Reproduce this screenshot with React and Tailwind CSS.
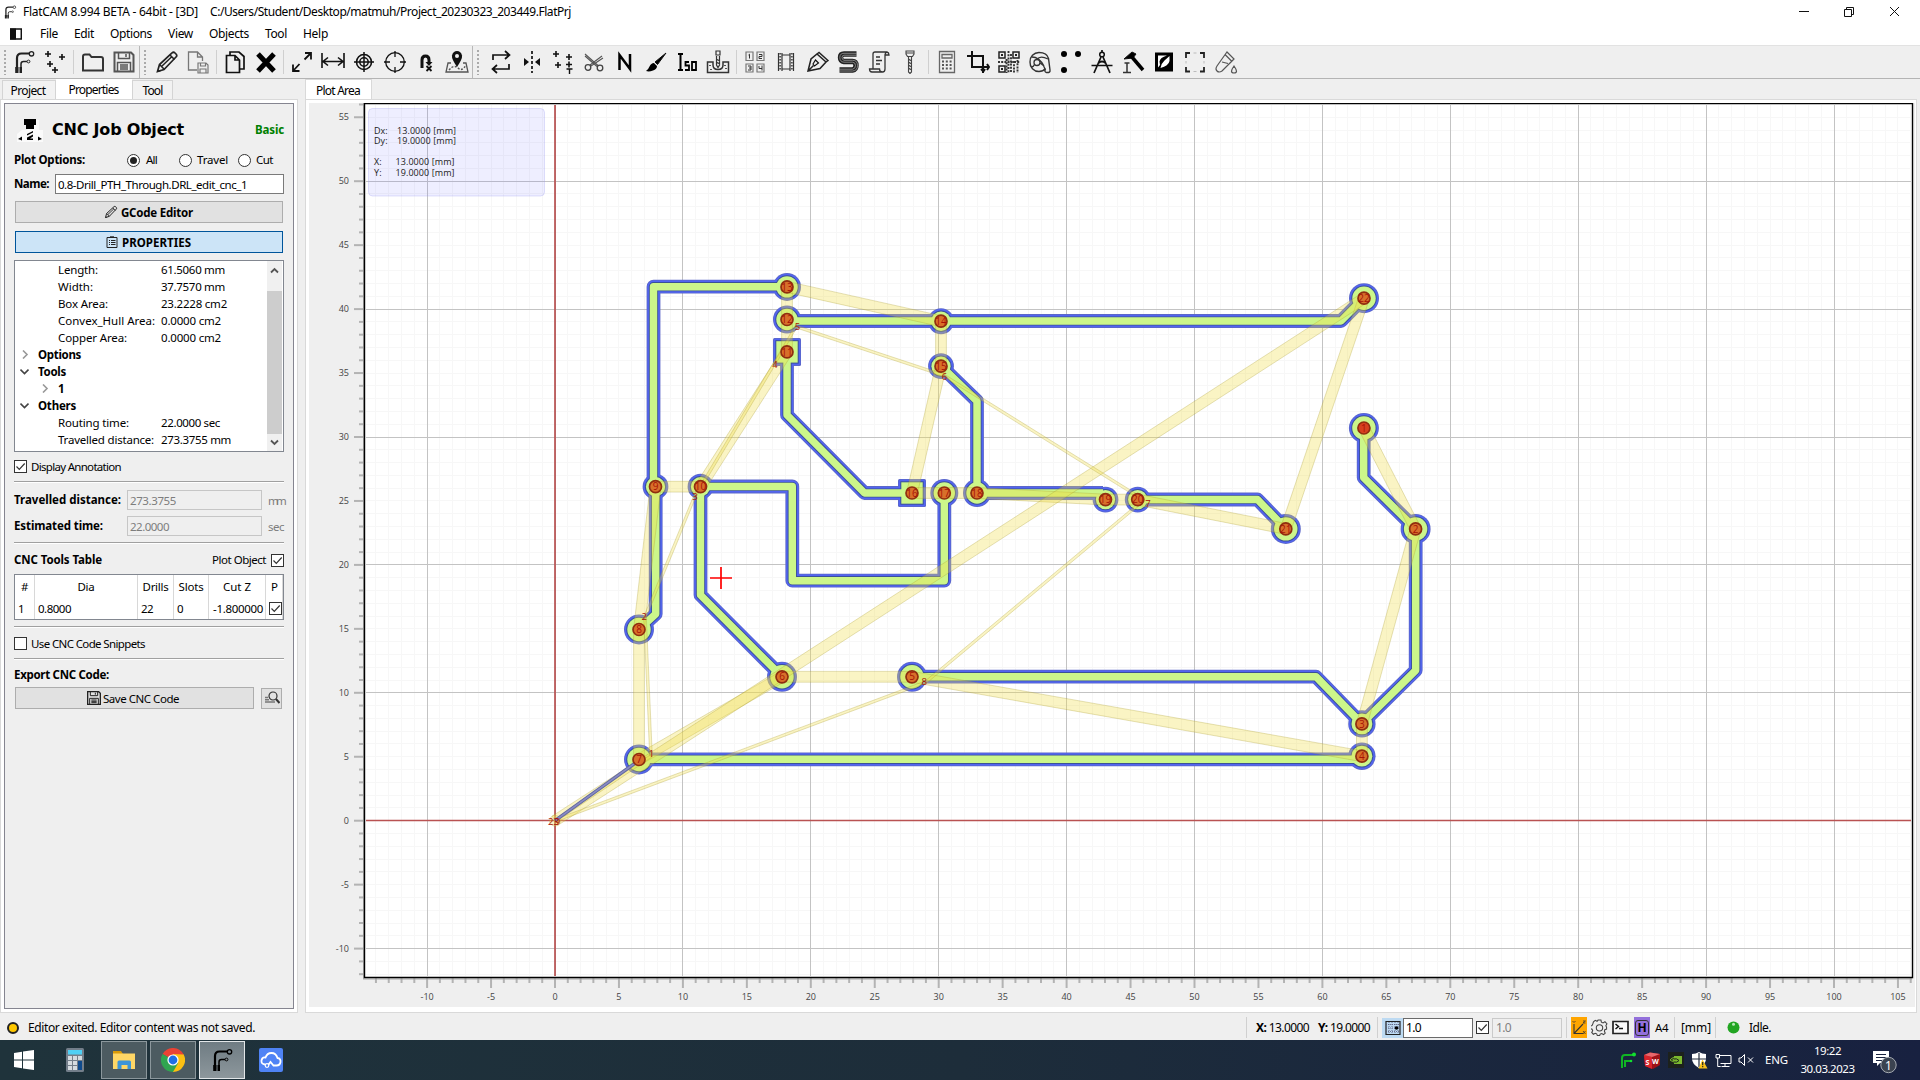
import React, { useLayoutEffect, useRef, useState } from "react";

/* Text run whose tracking is adjusted so that it fills a given width. */
function T({ w, className = "", children }) {
  const ref = useRef(null);
  const [ls, setLs] = useState(null);
  useLayoutEffect(() => {
    const n = ref.current.textContent.length;
    const natural = ref.current.getBoundingClientRect().width;
    if (w && n) setLs((w - natural) / n);
  }, [w]);
  return (
    <span ref={ref} className={`inline-block shrink-0 whitespace-pre ${className}`} style={ls === null ? undefined : { letterSpacing: `${ls}px` }}>
      {children}
    </span>
  );
}

function Svg({ s = 24, children, className = "", vb = "0 0 24 24" }) {
  return (
    <svg width={s} height={s} viewBox={vb} fill="none" stroke="#111" strokeWidth="1.5" className={`block shrink-0 ${className}`}>
      {children}
    </svg>
  );
}

/* ---------- toolbar icons ---------- */
const plusMark = (x, y, k) => <path key={k} d={`M${x - 3} ${y}h6M${x} ${y - 3}v6`} strokeWidth="1.6" />;

const FlatLogo = ({ s = 24, c = "#222" }) => (
  <Svg s={s}>
    <path d="M5 21V8Q5 3.500 9.500 3.500H17" stroke={c} strokeWidth="2.200" />
    <path d="M9 21v-7q0-2.500 2.500-2.500H15" stroke={c} strokeWidth="1.500" />
    <circle cx="19.500" cy="3.800" r="2.200" stroke={c} strokeWidth="1.300" />
    <circle cx="16.500" cy="11.500" r="1.400" stroke={c} strokeWidth="1" />
    <path d="M3.200 17h3.300v6H3.200zM7.500 17H10v6H7.500z" fill={c} stroke="none" />
  </Svg>
);
const NewGeo = () => <Svg>{plusMark(5, 4, 1)}{plusMark(19, 7, 2)}{plusMark(7, 14, 3)}{plusMark(12, 20, 4)}</Svg>;
const FolderI = () => <Svg><path d="M2 20.500V6.500Q2 4.500 4 4.500h4.500l2 2.500H20q2 0 2 2v11.500z" stroke="#333" strokeWidth="2" /></Svg>;
const SaveI = ({ s = 24, c = "#555" }) => (
  <Svg s={s}>
    <path d="M2.500 2.500h16.500l2.500 2.500v16.500h-19z" stroke={c} strokeWidth="2" />
    <path d="M6.500 2.500v6h11v-6M14 4v3M5.500 21v-8.500h13V21M8 15h8M8 17h8M8 19h8" stroke={c} />
  </Svg>
);
const PencilI = ({ s = 24 }) => (
  <Svg s={s}>
    <path d="M2.500 21.500l2-7L17 3q1.500-1.500 3 0l1 1q1.500 1.500 0 3L9 19.500z" stroke="#222" strokeWidth="1.700" />
    <path d="M4.500 14.500l5 5M15 5l4.500 4.500M6.500 16.500L17 6.500M2.500 21.500l3-1" stroke="#222" />
  </Svg>
);
const FileSaveI = () => (
  <Svg>
    <path d="M11 20H2.500V2h9l5 5v4M11.500 2v5h5" stroke="#777" strokeWidth="1.300" />
    <path d="M12 13h8l2 2v8H12zM14.500 13v3h5v-3M14 23v-4h6v4" stroke="#777" strokeWidth="1.200" />
  </Svg>
);
const CopyI = () => <Svg><path d="M3.500 22.500V5.500h8.500l4.500 4.500v12.500zM7 5V2h9l5 4.500V19h-4M12 5.500V10h4.500" strokeWidth="1.700" /></Svg>;
const XI = () => <Svg><path d="M4 4l16 17M20 4L4 21" stroke="#000" strokeWidth="5" /></Svg>;
const ExpandI = () => <Svg><path d="M3 21l6.500-7M14.500 9.500L21 3M15 3h6v6.500M3 14.500V21h6.500" strokeWidth="1.800" /></Svg>;
const DistI = () => <Svg><path d="M1 3v15M23 3v15M2 11.500h20M7 7.500l-5 4 5 4M17 7.500l5 4-5 4" strokeWidth="1.600" /></Svg>;
const TargetI = () => <Svg><circle cx="12" cy="12" r="7.500" strokeWidth="1.600" /><circle cx="12" cy="12" r="4.200" strokeWidth="1.500" /><path d="M12 2v20M2 12h20" strokeWidth="1.500" /></Svg>;
const CrossI = () => <Svg><circle cx="12" cy="12" r="9.300" strokeWidth="1.300" /><path d="M12 1v6M12 17v6M1 12h6M17 12h6" strokeWidth="1.300" /></Svg>;
const JumpI = () => <Svg><path d="M8 18V10q0-4 3.500-4T15 10v3" strokeWidth="3" /><path d="M11.500 12h7L15 16z" fill="#111" stroke="none" /><path d="M12.500 16l5 5M17.500 16l-5 5" strokeWidth="1.800" /></Svg>;
const MapI = () => (
  <Svg>
    <path d="M6 13H3L1 22h22l-2-9h-3" stroke="#555" strokeWidth="1.300" /><path d="M4 20q5-6 9-2t8-3" stroke="#555" strokeDasharray="2 1.500" />
    <path d="M12 17Q6.500 9 7 5.500Q8 1 12 1t5 4.500Q17.500 9 12 17z" fill="#111" stroke="none" /><circle cx="12" cy="6" r="2" fill="#efefef" stroke="none" />
  </Svg>
);
const SwapI = () => <Svg><path d="M4 10V5h16M16 1l4.500 4L16 9M20 14v5H4M8 15l-4.500 4L8 23" strokeWidth="1.700" /></Svg>;
const MirrorI = () => <Svg><path d="M12 1v22" strokeDasharray="3 2" strokeWidth="1.700" /><path d="M4 8l5 4-5 4zM20 8l-5 4 5 4z" fill="#111" stroke="none" /></Svg>;
const DotsTI = () => <Svg>{plusMark(5, 4, 1)}{plusMark(18, 7, 2)}{plusMark(7, 15, 3)}{plusMark(18, 14.5, 4)}<path d="M15.500 19h6M18.500 19v5" strokeWidth="1.400" /></Svg>;
const ScissI = () => (
  <Svg><path d="M3 4l13 11.500M20 6L8 15M3 6l12 10.500M21 8l-12 8" stroke="#555" strokeWidth="1.100" /><circle cx="6" cy="17.500" r="2.800" stroke="#444" strokeWidth="1.300" /><circle cx="18" cy="18" r="2.800" stroke="#444" strokeWidth="1.300" /></Svg>
);
const NI = () => <Svg><path d="M6.500 20V5l10.500 14V4" stroke="#000" strokeWidth="2.500" /></Svg>;
const BrushI = () => <Svg><path d="M22 3L11 12l2.500 2.500z" fill="#000" strokeWidth="1" /><path d="M2 21q2-1 3.500-4.500T10 13l3 3q0 3-4 4.500T2 21z" fill="#000" stroke="none" /></Svg>;
const IsoI = () => <Svg><path d="M3 4h5M5.500 4v16M3 20h5" strokeWidth="2" stroke="#000" /><path d="M14 12h-3.500v3.500H14V20h-4M17 12h4v8h-4z" strokeWidth="1.800" stroke="#000" /></Svg>;
const MillI = () => (
  <Svg>
    <path d="M1.500 12H7v3q0 4.500 5 4.500t5-4.500v-3h5.500v10.500h-21z" stroke="#333" strokeWidth="1.500" />
    <path d="M10 1h4v4h-4zM10.500 6v9l1.500 2.500 1.500-2.500V6M10 9l4 2M10 12l4 2" stroke="#333" strokeWidth="1.200" /><path d="M4 15v1M5 19v1M19 15v1M20 18v1" stroke="#222" />
  </Svg>
);
const PanelI = () => (
  <Svg>
    <path d="M3 2h7v8.500H3zM14 2h7v8.500h-7zM3 14h7v8H3zM14 14h7v8h-7z" stroke="#777" strokeWidth="1.200" />
    <path d="M5.500 5l1-.8V8.500M16 4.500h3v2h-3v2h3M5 16h3v4H5M6 18h2M16 16v2.500h3M19 15.500v5" stroke="#333" strokeWidth="1" />
  </Svg>
);
const FilmI = () => <Svg><path d="M4.500 3v18M19.500 3v18M8 3v18M16 3v18M8 5h8M8 19h8" stroke="#333" strokeWidth="1.200" /><path d="M6.200 3v18M17.800 3v18" stroke="#555" strokeWidth="2" strokeDasharray="1.500 1.500" /></Svg>;
const PenI = () => <Svg><path d="M3 21l3-12 6-5 9 8-6 6.500zM12 4l2-1.500 9 8-2 1.500M3 21l5.500-5.500" strokeWidth="1.500" stroke="#222" /><path d="M8 14l2.500-4 3 3-4 3z" strokeWidth="1.200" /></Svg>;
const SolderI = () => (
  <Svg>
    <path d="M20.500 4H8Q4.500 4 4.500 7.500T8 11.500h8.500q3.500 0 3.500 4T16.500 20H3.500" stroke="#222" strokeWidth="5.400" />
    <path d="M21 3.300H8Q3.800 3.300 3.800 7.500T8 12.200h8.500q3 0 3 3.300t-3 3.700H3M21 5.200H8Q6 5.200 6 7.500T8 10.300h8.500q5 0 5 5.200T16.500 21H3" stroke="#aaa" strokeWidth=".7" />
  </Svg>
);
const ScriptI = () => <Svg><path d="M6 19V4q0-2 2-2h12q2 .5 2 3h-4v14q0 3-2.500 3H5q-2.500 0-2.500-3h10q0 3 3 3M18 5q0-2.500 2-3M9 7h4M9 10.500h6M9 14h4" stroke="#333" strokeWidth="1.300" /></Svg>;
const BitI = () => <Svg><path d="M8 1h8v3l-1.500 2.500h-5L8 4zM8 3h8M10.500 7v15l1.500 1.500 1.500-1.500V7M10.500 9l3 2M10.500 12l3 2M10.500 15l3 2M10.500 18l3 2" stroke="#444" strokeWidth="1.100" /></Svg>;
const CalcI = () => (
  <Svg><path d="M4.500 1.500h15v21h-15zM7 4.500h10v3.500H7z" stroke="#666" strokeWidth="1.300" /><path d="M7 11.500h11M7 15h11M7 18.500h11" stroke="#555" strokeWidth="2" strokeDasharray="2 1.800" /></Svg>
);
const CropI = () => <Svg><path d="M6 1v16h17M1 6h16v17M17 21l-2-2M19 19l-2 3M21 14l2 3-2 3" strokeWidth="2" /></Svg>;
const QrI = () => (
  <Svg>
    <path d="M2 2h6v6H2zM16 2h6v6h-6zM2 16h6v6H2z" stroke="#222" strokeWidth="1.500" /><path d="M4 4h2v2H4zM18 4h2v2h-2zM4 18h2v2H4z" fill="#222" stroke="none" />
    <path d="M11.500 1v22M14 4v19M17 11v12M20.500 10v13M1 12h22M9.500 9v14" stroke="#333" strokeWidth="1.900" strokeDasharray="2 1.200" />
  </Svg>
);
const RollI = () => <Svg><path d="M2 12a9 9 0 0 1 9-9.500q8 0 9.500 6L22 20q.5 3-3.500 2.500Q16 22 17.500 19M2 12a9 9 0 0 0 9 9.500q4 0 6.500-3" strokeWidth="1.400" stroke="#333" /><circle cx="9" cy="12.500" r="3" stroke="#333" strokeWidth="1.300" /><path d="M4 7q7 0 12 9M3.500 17q2 0 3-2.500M9 9.500Q12 5 20 9M12 13q4 2 5 6" stroke="#333" strokeWidth="1.300" /></Svg>;
const FidI = () => <Svg><g fill="#000" stroke="none"><circle cx="5" cy="4" r="3" /><circle cx="19" cy="4" r="3" /><circle cx="5" cy="20" r="3" /></g></Svg>;
const CompassI = () => <Svg><circle cx="12" cy="4.500" r="2.300" /><path d="M12 0v3M11 7L4 23M13 7l7 16M1.500 15.500h21M8.500 13q3.500-3 7 0" strokeWidth="1.700" /></Svg>;
const HammerI = () => <Svg><path d="M3 9l8-7 4 2-3 4z" fill="#000" strokeWidth="1" /><path d="M10.500 6.500L22 20" stroke="#000" strokeWidth="3.500" /><path d="M6 13v9M2 22.500h8M3.500 13h5" strokeWidth="1.500" stroke="#333" /></Svg>;
const InvertI = () => <Svg><path d="M3 2.500h18v19H3z" fill="#000" stroke="none" /><path d="M6 5.500h9q-7 2-7.500 6L8 15l-2 2.500zM17.500 6v5q-1 5-9 7 1-5 4-7.500z" fill="#fff" stroke="none" /></Svg>;
const CornersI = () => <Svg><path d="M3 8V3h4M17 3h4v5M21 17v4.500h-4M7 21.500H3V17" strokeWidth="1.800" stroke="#222" /><path d="M10.500 3h3M10.500 21.500h3M3 11v2.500M21 11v2.500" stroke="#bbb" strokeWidth="1" /></Svg>;
const TubeI = () => <Svg><path d="M13 2l7 7-1.500 1.500L8 21q-3 2-5 0t0-5L11.500 4zM11 4.500l6.500 6.500M8 12l6 1.500" stroke="#555" strokeWidth="1.200" /><path d="M20 16q5 7 0 7t0-7z" stroke="#555" strokeWidth="1.200" /></Svg>;

const toolGroups = [
  [FlatLogo, NewGeo], [FolderI, SaveI], [PencilI, FileSaveI], [CopyI, XI],
  [ExpandI, DistI, TargetI, CrossI, JumpI, MapI],
  [SwapI, MirrorI, DotsTI, ScissI, NI, BrushI, IsoI, MillI],
  [PanelI, FilmI, PenI, SolderI, ScriptI, BitI],
  [CalcI, CropI, QrI, RollI, FidI, CompassI, HammerI, InvertI, CornersI, TubeI],
];
const Sep = ({ cls }) => <div className={`flex h-full justify-center ${cls}`}><div className="my-auto h-[24px] w-px bg-[#cfcfcf]" /></div>;
const Handle = ({ cls }) => (
  <div className={`flex h-full items-center ${cls}`}>
    <div className="w-px self-stretch bg-[#b8b8b8]" />
    <Svg s={26} vb="0 0 26 26" className="-ml-[6px] -mr-[10px]"><path d="M11 1v25" stroke="#aaa" strokeWidth="2" strokeDasharray="2 2" /></Svg>
  </div>
);
const dividers = [
  <Sep key="a" cls="w-[7px]" />, <Handle key="b" cls="w-[12px]" />, <Sep key="c" cls="w-[6px]" />, <Sep key="d" cls="w-[5px]" />,
  <Handle key="e" cls="w-[13px]" />, <Sep key="f" cls="w-[6px]" />, <Sep key="g" cls="w-[6px]" />,
];

function Toolbar() {
  return (
    <div className="flex h-[34px] items-center border-y border-t-[#e2e2e2] border-b-[#b4b4b4] bg-[#efefef]">
      <div className="w-[8px] shrink-0">
        <svg width="8" height="26" className="block"><path d="M5 1v25" stroke="#aaa" strokeWidth="2" strokeDasharray="2 2" /></svg>
      </div>
      {toolGroups.map((g, i) => (
        <React.Fragment key={i}>
          {g.map((I, j) => <div key={j} className="flex w-[31px] shrink-0 justify-center"><I /></div>)}
          {dividers[i]}
        </React.Fragment>
      ))}
    </div>
  );
}

/* ---------- left panel ---------- */
const Check = ({ on, className = "" }) => (
  <div className={`flex size-[13px] shrink-0 items-center justify-center border border-[#333] bg-white ${className}`}>
    {on && <Svg s={11} vb="0 0 11 11"><path d="M1.500 5.500L4.300 8.300 9.700 2.500" stroke="#333" strokeWidth="1.200" /></Svg>}
  </div>
);
const Radio = ({ on }) => (
  <div className="flex size-[13px] shrink-0 items-center justify-center rounded-full border border-[#333] bg-white">
    {on && <div className="size-[7px] rounded-full bg-[#222]" />}
  </div>
);
const Hr = ({ cls }) => <div className={`h-[2px] shrink-0 border-t border-[#a0a0a0] bg-white ${cls}`} />;

const treeRows = [
  ["Length:", 40, "61.5060 mm", 64], ["Width:", 35, "37.7570 mm", 64], ["Box Area:", 50, "23.2228 cm2", 66],
  ["Convex_Hull Area:", 97, "0.0000 cm2", 60], ["Copper Area:", 69, "0.0000 cm2", 60],
];
const TreeRow = ({ r }) => (
  <div className="flex h-[17px] items-center pl-[43px]">
    <div className="w-[103px]"><T w={r[1]}>{r[0]}</T></div><T w={r[3]}>{r[2]}</T>
  </div>
);
const Chev = ({ open }) => (
  <Svg s={9} vb="0 0 9 9"><path d={open ? "M.5 2.500l4 4 4-4" : "M3 .5l4 4-4 4"} stroke={open ? "#444" : "#999"} strokeWidth="1.600" /></Svg>
);
const Branch = ({ open, label, w, cls }) => (
  <div className={`flex h-[17px] items-center ${cls}`}><Chev open={open} /><T w={w} className="ml-[9px] font-bold">{label}</T></div>
);

function LeftPanel() {
  return (
    <div className="flex w-[298px] shrink-0 flex-col">
      <div className="flex h-[20px] items-end pl-[2px]">
        <div className="flex h-[19px] w-[54px] items-center justify-center border border-b-0 border-[#d4d4d4] bg-[#f2f2f2] pr-[2px] pt-[2px]"><T w={35}>Project</T></div>
        <div className="flex h-[20px] w-[76px] items-center justify-center bg-white pr-[1px] pt-[2px]"><T w={50}>Properties</T></div>
        <div className="flex h-[19px] w-[41px] items-center justify-center border border-b-0 border-[#d4d4d4] bg-[#f2f2f2] pt-[2px]"><T w={20}>Tool</T></div>
      </div>
      <div className="flex h-[914px] flex-col border border-[#d9d9d9] bg-white py-[3px] pl-[3px] pr-[3px]">
        <div className="flex grow flex-col border border-[#858590] bg-[#efefef] pl-[9px] pr-[9px] text-[11.500px]">
          <div className="mt-[12px] flex h-[28px] items-center">
            <svg width="28" height="26" viewBox="0 0 28 26" className="ml-[2px] block shrink-0">
              <path d="M1 25V17l5-4h5V3h12v10h4v12z" fill="#fafafa" />
              <path d="M8 2h12v6h-2v4h-8V8H8z" fill="#000" /><path d="M11 17l6-3v1.500l-6 3zM11 20.500l6-3v2l-3 2h3v1.500h-6z" fill="#000" />
              <path d="M2 22l4-2.500v4zM26 22l-4-2.500v4z" fill="#000" />
            </svg>
            <T w={132} className="ml-[8px] font-[DejaVu_Sans] text-[16px] font-bold">CNC Job Object</T>
            <T w={29} className="ml-auto font-bold text-[#008000]">Basic</T>
          </div>
          <div className="mt-[6px] flex h-[20px] items-center">
            <T w={71} className="mr-[42px] font-bold">Plot Options:</T>
            <Radio on /><T w={11} className="ml-[6px] mr-[22px]">All</T>
            <Radio /><T w={31} className="ml-[5px] mr-[10px]">Travel</T>
            <Radio /><T w={17} className="ml-[5px]">Cut</T>
          </div>
          <div className="mt-[4px] flex h-[20px] items-center">
            <T w={35} className="mr-[6px] font-bold">Name:</T>
            <div className="flex h-full grow items-center border border-[#7a7a7a] bg-white pl-[2px] pt-[2px]"><T w={189}>0.8-Drill_PTH_Through.DRL_edit_cnc_1</T></div>
          </div>
          <div className="mx-[1px] mt-[7px] flex h-[22px] items-center border border-[#adadad] bg-[#e1e1e1] pl-[88px] font-bold"><PencilI s={14} /><T w={72} className="ml-[3px] mt-[2px]">GCode Editor</T></div>
          <div className="mx-[1px] mt-[8px] flex h-[22px] items-center border border-[#00559b] bg-[#cce4f7] pl-[90px] font-bold">
            <Svg s={12} vb="0 0 12 12"><path d="M1 1.500h10v10H1zM3 4.500h1M5 4.500h4.500M3 6.500h1M5 6.500h4.500M3 8.500h1M5 8.500h4.500M4 .8h4" stroke="#222" strokeWidth="1" /></Svg>
            <T w={69} className="ml-[4px] mt-[2px]">PROPERTIES</T>
          </div>
          <div className="mt-[7px] flex h-[192px] border border-[#828790] bg-white">
            <div className="grow">
              {treeRows.map((r) => <TreeRow key={r[0]} r={r} />)}
              <Branch label="Options" w={43} cls="pl-[5px]" />
              <Branch open label="Tools" w={28} cls="pl-[5px]" />
              <Branch label="1" w={6} cls="pl-[25px]" />
              <Branch open label="Others" w={38} cls="pl-[5px]" />
              <TreeRow r={["Routing time:", 71, "22.0000 sec", 59]} />
              <TreeRow r={["Travelled distance:", 96, "273.3755 mm", 70]} />
            </div>
            <div className="mr-[1px] flex w-[15px] flex-col items-center bg-[#f0f0f0]">
              <Svg s={9} vb="0 0 9 9" className="mt-[5px]"><path d="M1 6.500L4.500 3 8 6.500" stroke="#555" strokeWidth="1.800" /></Svg>
              <div className="mt-[16px] h-[143px] w-full bg-[#cdcdcd]" />
              <Svg s={9} vb="0 0 9 9" className="mt-[4px]"><path d="M1 2.500L4.500 6 8 2.500" stroke="#555" strokeWidth="1.800" /></Svg>
            </div>
          </div>
          <div className="mt-[6px] flex h-[17px] items-center"><Check on /><T w={90} className="ml-[4px]">Display Annotation</T></div>
          <Hr cls="mt-[6px]" />
          <div className="mt-[7px] flex h-[20px] items-center">
            <div className="w-[113px]"><T w={107} className="font-bold">Travelled distance:</T></div>
            <div className="flex h-full w-[135px] items-center border border-[#c6c6c6] pl-[2px] pt-[2px] text-[#7d7d7d]"><T w={46}>273.3755</T></div>
            <T w={16} className="ml-auto mt-[2px] text-[#7d7d7d]">mm</T>
          </div>
          <div className="mt-[6px] flex h-[20px] items-center">
            <div className="w-[113px]"><T w={89} className="font-bold">Estimated time:</T></div>
            <div className="flex h-full w-[135px] items-center border border-[#c6c6c6] pl-[2px] pt-[2px] text-[#7d7d7d]"><T w={39}>22.0000</T></div>
            <T w={16} className="ml-auto mt-[2px] text-[#7d7d7d]">sec</T>
          </div>
          <Hr cls="mt-[6px]" />
          <div className="mt-[7px] flex h-[18px] items-center">
            <T w={88} className="mr-auto font-bold">CNC Tools Table</T><T w={54} className="mr-[5px]">Plot Object</T><Check on />
          </div>
          <div className="mt-[5px] grid h-[46px] grid-cols-[20px_103px_36px_35px_57px_1fr] grid-rows-[23px_21px] border border-[#828790] bg-white [&>*]:flex [&>*]:items-center [&>*]:border-r [&>*]:border-[#d8d8d8]">
            {[["#", 7], ["Dia", 17], ["Drills", 26], ["Slots", 25], ["Cut Z", 28], ["P", 6]].map((c) => <div key={c[0]} className="justify-center"><T w={c[1]}>{c[0]}</T></div>)}
            <div className="pl-[3px]"><T w={6}>1</T></div>
            <div className="pl-[3px]"><T w={33}>0.8000</T></div>
            <div className="pl-[3px]"><T w={12}>22</T></div>
            <div className="pl-[3px]"><T w={6}>0</T></div>
            <div className="pl-[4px]"><T w={50}>-1.800000</T></div>
            <div className="justify-end"><Check on /></div>
          </div>
          <Hr cls="mt-[6px]" />
          <div className="mt-[7px] flex h-[17px] items-center"><Check /><T w={114} className="ml-[4px]">Use CNC Code Snippets</T></div>
          <Hr cls="mt-[6px]" />
          <div className="mt-[6px] flex h-[18px] items-center"><T w={95} className="font-bold">Export CNC Code:</T></div>
          <div className="mt-[3px] flex items-center">
            <div className="ml-[1px] flex h-[22px] w-[239px] items-center border border-[#adadad] bg-[#e1e1e1] pl-[70px]"><SaveI s={16} c="#222" /><T w={76} className="ml-[1px] mt-[2px]">Save CNC Code</T></div>
            <div className="ml-[7px] flex h-[21px] w-[21px] items-center justify-center border border-[#adadad] bg-[#e1e1e1]">
              <Svg s={16} vb="0 0 16 16"><circle cx="9" cy="6" r="4" stroke="#333" strokeWidth="1.200" /><path d="M12 9l3.500 4" stroke="#333" strokeWidth="2" /><path d="M1 7.500h3M1 9.800h4M1 12h10" stroke="#777" strokeWidth="1.400" /></Svg>
            </div>
          </div>
        </div>
      </div>
    </div>
  );
}

/* ---------- plot ---------- */
const X0 = 555, Y0 = 820.7, U = 12.79;
const px = (v) => X0 + v * U;
const py = (v) => Y0 - v * U;
const range = (a, b, s = 1) => Array.from({ length: Math.floor((b - a) / s) + 1 }, (_, i) => a + i * s);

/* number, x, y, pad radius (0 = square pad) */
const pads = [
  [1, 1363.9, 428, 15], [2, 1415.6, 528.9, 15], [3, 1361.9, 723.9, 13.7], [4, 1361.9, 756.2, 13.7], [5, 912, 676.8, 15],
  [6, 782, 676.8, 15], [7, 639, 759.5, 15], [8, 639, 629.5, 15], [9, 655.5, 486.7, 12.9], [10, 700.5, 486.7, 12.9],
  [11, 787, 351.9, 0], [12, 787, 319.5, 14], [13, 787, 286.9, 14], [14, 941, 321.2, 13], [15, 941, 366.2, 12.9],
  [16, 912, 493, 0], [17, 944.3, 493, 14], [18, 977, 493, 14], [19, 1105.5, 499.6, 12.9], [20, 1137.7, 499.6, 12.9],
  [21, 1285.8, 528.9, 15], [22, 1364, 298.2, 15],
];
const traces = [
  "M787 286.700H653.500V486.500", "M655.700 486.500V614L639 629.300", "M787 321H1341L1363.700 298", "M787 351.700V415L864.500 493H912",
  "M941 366L977 401V493H1103", "M700.500 486.500H792.300V580.700H944.300V493", "M700.500 486.500V595L782 676.700", "M1137.500 499.500H1257.500L1285.700 528.700",
  "M1363.700 427.700V477.700L1415.300 528.700", "M1415.700 528.700V670.300L1361.700 723.700", "M1361.700 723.700L1316 676.700H912", "M639 759.300H1359",
];
const layers = [["#5c68c8", 13.8, 0], ["#5264f2", 12.2, 0.8], ["#3b5296", 9.2, 2.3], ["#ccf68a", 7.4, 3.3]];
const wide = [...pads.map((p) => [p[1], p[2]]), [555, 820.7]];
const thin = [[555, 820.7], [651, 756], [645, 617], [694.5, 497], [776, 361], [796, 326.5], [944, 375.5], [1144, 500], [926, 682], [555, 820.7]];
const thinMarks = [["1", 651.5, 757], ["2", 644.3, 620], ["3", 695, 500], ["4", 775, 367.5], ["5", 797.5, 329.5], ["6", 944.5, 380], ["7", 1148, 507], ["8", 924.3, 685], ["23", 553.5, 824.5], ["9", 557.5, 824.5]];

function band(a, b, w) {
  const dx = b[0] - a[0], dy = b[1] - a[1], l = Math.hypot(dx, dy), nx = (-dy / l) * w / 2, ny = (dx / l) * w / 2;
  return `${a[0] + nx},${a[1] + ny} ${b[0] + nx},${b[1] + ny} ${b[0] - nx},${b[1] - ny} ${a[0] - nx},${a[1] - ny}`;
}

function Plot() {
  return (
    <svg width="1606" height="904" viewBox="309 103 1606 904" className="block shrink-0 bg-[#efefef] font-[Open_Sans]">
      <rect x="364" y="103" width="1549" height="875" fill="#fff" />
      <g strokeWidth="1" stroke="#f7f7f7" shapeRendering="crispEdges">
        {range(-14, 106).map((v) => <path key={v} d={`M${px(v)} 105V976`} />)}
        {range(-12, 55).map((v) => <path key={v} d={`M366 ${py(v)}H1911`} />)}
      </g>
      <g strokeWidth="1" stroke="#c3c3c3" shapeRendering="crispEdges">
        {range(-10, 100, 10).map((v) => <path key={v} d={`M${px(v)} 105V976`} />)}
        {range(-10, 50, 10).map((v) => <path key={v} d={`M366 ${py(v)}H1911`} />)}
      </g>
      <g stroke="#b3b3b3" strokeWidth="2">
        {range(-14, 106).map((v) => <path key={v} d={`M${px(v)} 978v${v % 5 ? 5 : 10}`} />)}
        {range(-12, 56).map((v) => <path key={v} d={`M364 ${py(v)}h${v % 5 ? -5 : -10}`} />)}
      </g>
      <path d="M363.500 103V979M363 979H1912" stroke="#a8a8a8" />
      <path d="M364 103.500H1912.500V977.500H364.500V103" stroke="#000" strokeWidth="1.400" fill="none" />
      <g fill="#444" fontSize="9">
        {range(-10, 105, 5).map((v) => <text key={v} x={px(v)} y="1000" textAnchor="middle">{v}</text>)}
        {range(-10, 55, 5).map((v) => <text key={v} x="349" y={py(v) + 3.2} textAnchor="end">{v}</text>)}
      </g>

      <path d="M555 105V976M366 820.500H1911" stroke="#b95252" strokeWidth="1.700" />
      {layers.map(([c, w, inset]) => (
        <g key={c}>
          <g fill="none" stroke={c} strokeWidth={w} strokeLinejoin="round">{traces.map((d) => <path key={d} d={d} />)}</g>
          <g fill={c}>
            {pads.map(([n, x, y, r]) => r
              ? <circle key={n} cx={x} cy={y} r={r - inset} />
              : <rect key={n} x={x - 14 + inset} y={y - 14 + inset} width={28 - 2 * inset} height={28 - 2 * inset} rx={inset > 2 ? 0 : 1.5} />)}
          </g>
        </g>
      ))}
      <g fill="#f0de48" fillOpacity=".32" stroke="#a89a30" strokeOpacity=".3" strokeWidth="1">
        {wide.slice(1).map((b, i) => <polygon key={i} points={band(wide[i], b, 10.8)} />)}
        <circle cx="555" cy="820.7" r="5.400" />
        {thin.slice(1).map((b, i) => <polygon key={i} points={band(thin[i], b, 2.6)} />)}
      </g>
      <path d="M555 820.700L638 761" stroke="#6068a0" strokeWidth="3.400" />
      <path d="M555 820.700L638 761" stroke="#8a8bc4" strokeWidth="1.600" />
      {pads.map(([n, x, y]) => (
        <g key={n}>
          <circle cx={x} cy={y} r="6" fill={n === 1 ? "#d7401f" : "#d8702a"} stroke="#8f2e10" strokeWidth="1.700" />
          <text x={x} y={y + 3.6} fontSize="10" textAnchor="middle" fill="#a81206">{n}</text>
        </g>
      ))}
      {thinMarks.map(([t, x, y]) => <text key={t} x={x} y={y} fontSize="9.500" textAnchor="middle" fill="#a81206">{t}</text>)}
      <path d="M710 578h22M721 567v22" stroke="#ff0000" strokeWidth="1.700" />

      <rect x="368.500" y="108.500" width="176" height="87.500" rx="4" fill="#6666ff" fillOpacity=".11" stroke="#9a9aee" strokeOpacity=".3" />
      <g fill="#222" fontSize="9">
        <text x="374" y="133.500" textLength="13.500">Dx:</text><text x="397" y="133.500" textLength="59">13.0000 [mm]</text>
        <text x="374" y="144" textLength="13.500">Dy:</text><text x="397" y="144" textLength="59">19.0000 [mm]</text>
        <text x="374" y="165" textLength="7.500">X:</text><text x="395.500" y="165" textLength="59">13.0000 [mm]</text>
        <text x="374" y="175.500" textLength="7.500">Y:</text><text x="395.500" y="175.500" textLength="59">19.0000 [mm]</text>
      </g>
    </svg>
  );
}

/* ---------- bars ---------- */
function StatusBar() {
  const sep = "h-[21px] w-px shrink-0 bg-[#d0d0d0]";
  return (
    <div className="flex h-[27px] items-center bg-[#efefef] pt-[2px] text-[12px]">
      <div className="ml-[7px] size-[12px] rounded-full border-2 border-[#222] bg-[#ffc800]" />
      <T w={227} className="ml-[9px]">Editor exited. Editor content was not saved.</T>
      <div className={`${sep} ml-auto`} />
      <T w={53} className="ml-[9px]"><b>X:</b> 13.0000</T><T w={52} className="ml-[9px]"><b>Y:</b> 19.0000</T>
      <div className={`${sep} ml-[7px]`} />
      <div className="ml-[4px] flex h-[20px] w-[21px] items-center justify-center bg-[#bddaf2]">
        <Svg s={16} vb="0 0 16 16"><path d="M1 1.500h14v13H1z" stroke="#222" strokeWidth="1.200" /><path d="M4 2v12M7 2v12M10 2v12M13 2v12M1 4.500h14M1 8h14M1 11.500h14" stroke="#557" strokeWidth=".8" strokeDasharray="1 1" /><circle cx="11.500" cy="8" r="1.800" fill="#000" stroke="none" /></Svg>
      </div>
      <div className="flex h-[20px] w-[70px] items-center border border-[#6a6a6a] bg-white pl-[2px]"><T w={15}>1.0</T></div>
      <Check on className="ml-[3px]" />
      <div className="ml-[3px] flex h-[20px] w-[70px] items-center border border-[#cacaca] pl-[3px] text-[#808080]"><T w={15}>1.0</T></div>
      <div className={`${sep} ml-[4px]`} />
      <div className="ml-[4px] flex h-[21px] w-[16px] items-center justify-center bg-[#ffa500]">
        <Svg s={16} vb="0 0 16 16"><path d="M3 4v9.500h9M3 13.500L12 4" stroke="#333" strokeWidth="1.100" /><path d="M1.500 1L3 2.500 4.500 1M12 1h2.500L12 3h2.500M12 11l2.500 3M14.500 11L12 14" stroke="#333" strokeWidth=".8" /></Svg>
      </div>
      <Svg s={17} className="ml-[4px]"><path d="M10 1.500h4l.7 3 2.300 1 2.700-1.600 2.800 2.800L21 9.400l1 2.300 0 2.500-2.500 1-.6 2.200 1.200 2.600-2.400 2-2.700-1.500-2 .8-.8 2.200h-3.200l-1-2.500-2-.8-2.700 1.300-2.300-2.500 1.400-2.500-.9-2-2.500-1V10l2.600-1 1-2.300L3.500 4 6 1.900l2.500 1.400z" stroke="#444" strokeWidth="1.500" /><circle cx="12" cy="12.500" r="4.500" stroke="#444" /></Svg>
      <Svg s={17} vb="0 0 17 17" className="ml-[4px]"><path d="M1 2.500h15v12H1z" stroke="#222" strokeWidth="1.700" fill="#fafafa" /><path d="M3.500 5l3 2.500-3 2.500M7 9.500h4" stroke="#111" strokeWidth="1.500" /></Svg>
      <div className="ml-[5px] flex h-[21px] w-[16px] items-center justify-center bg-[#9370db]"><div className="flex h-[16px] w-[14px] items-center justify-center rounded-[3px] border border-[#333]"><b className="text-[12px] leading-none">H</b></div></div>
      <T w={13} className="ml-[5px] text-[11.500px]">A4</T>
      <div className={`${sep} ml-[6px]`} /><T w={30} className="ml-[6px]">[mm]</T><div className={`${sep} ml-[4px]`} />
      <svg width="13" height="13" viewBox="0 0 13 13" className="ml-[11px] block"><circle cx="6.500" cy="6.500" r="6" fill="#22a522" /><circle cx="6.500" cy="3.200" r="1.500" fill="#b6e8b6" /></svg>
      <T w={22} className="ml-[9px] mr-[149px]">Idle.</T>
    </div>
  );
}

function TaskBar() {
  const cell = "flex h-[38px] w-[46px] shrink-0 items-center justify-center border";
  return (
    <div className="flex h-[40px] items-center bg-linear-to-r from-[#1f333b] via-[#1d2d3a] to-[#182140] text-white">
      <svg width="20" height="20" viewBox="0 0 20 20" className="ml-[14px] block shrink-0"><path d="M0 3l8-1.200V9.500H0zM9 1.600L20 0v9.500H9zM0 10.500h8v7.700L0 17zM9 10.500h11V20L9 18.400z" fill="#fff" /></svg>
      <svg width="18" height="24" viewBox="0 0 18 24" className="ml-[32px] block shrink-0">
        <rect width="18" height="24" rx="1.500" fill="#737e8a" /><rect x="2" y="2" width="14" height="4.500" fill="#4fd0f5" />
        <path d="M2 8h4v4H2zM7 8h4v4H7zM12 8h4v4h-4zM2 13h4v4H2zM7 13h4v4H7zM2 18h4v4H2zM7 18h4v4H7z" fill="#d5dbe0" /><path d="M12 13h4v9h-4z" fill="#0f4a8c" />
      </svg>
      <div className={`${cell} ml-[17px] border-[#8b979c] bg-[#4c5b61]`}>
        <svg width="24" height="20" viewBox="0 0 24 20"><path d="M1 1h8l2 3H1z" fill="#d99a08" /><path d="M1 3.500h22V19H1z" fill="#ffd766" /><path d="M5.500 19v-7q0-1.500 1.500-1.500h10.500q1.500 0 1.500 1.500v7h-3.500v-4h-6v4z" fill="#3d95d8" /></svg>
      </div>
      <div className={`${cell} ml-[3px] border-[#8b979c] bg-[#4c5b61]`}>
        <svg width="24" height="24" viewBox="0 0 24 24">
          <path d="M12 12L1.600 6A12 12 0 0 1 22.400 6z" fill="#e94335" /><path d="M12 12V24A12 12 0 0 0 22.400 6H12z" fill="#fbbf12" /><path d="M1.600 6A12 12 0 0 0 12 24L17.200 15 12 12z" fill="#30a550" />
          <path d="M12 6.500h10.700l-.3-.5z" fill="#e94335" /><circle cx="12" cy="12" r="5.600" fill="#fff" /><circle cx="12" cy="12" r="4.400" fill="#1f6fe5" />
        </svg>
      </div>
      <div className={`${cell} ml-[3px] border-[#e2e6e8] bg-linear-to-b from-[#6f7c83] to-[#8d979c]`}><FlatLogo c="#000" /></div>
      <svg width="24" height="24" viewBox="0 0 24 24" className="ml-[14px] block shrink-0"><rect width="24" height="24" rx="2" fill="#4f83f5" /><path d="M6 16.500Q2 16 2.500 12.500T6.500 9.500Q8 5 12.500 5t6 5q3.500.5 3 4t-4 3.500h-3l-3-3.500-3 4" fill="none" stroke="#fff" strokeWidth="1.800" /><circle cx="8" cy="17.500" r="1.800" fill="#4f83f5" stroke="#fff" strokeWidth="1.200" /></svg>

      <svg width="16" height="17" viewBox="0 0 16 17" className="ml-auto block shrink-0"><path d="M2 16V6q0-3 3-3h8M5 15V9h5" fill="none" stroke="#10b524" strokeWidth="2" /><circle cx="14" cy="2.500" r="2" fill="#12e030" /><circle cx="11" cy="9" r="1.300" fill="#12e030" /></svg>
      <svg width="16" height="17" viewBox="0 0 16 17" className="ml-[8px] block shrink-0"><path d="M0 3l6-2.500 10 1.500v11l-7 4-8-3z" fill="#9c1217" /><path d="M0 3l8 2v12l-7-3z" fill="#d8242b" /><path d="M0 3l6-2.500 10 1.500-8 3z" fill="#e8676c" /><text x="1.500" y="12.500" fontSize="7" fontWeight="bold" fill="#fff">S</text><text x="8" y="12" fontSize="7" fontWeight="bold" fill="#fff">W</text></svg>
      <svg width="16" height="16" viewBox="0 0 16 16" className="ml-[8px] block shrink-0"><rect width="16" height="16" fill="#1c211c" /><path d="M6 4h8v8H6z" fill="#7ab82e" /><path d="M2 8q4-5 9 0-4 4-9 0zM4.500 8q2-2.500 4 0-1.500 2-4 0z" fill="none" stroke="#7ab82e" strokeWidth="1" /><path d="M6 7q2.500-1 5 1.500Q9 11 6 10" fill="none" stroke="#1c211c" /></svg>
      <svg width="17" height="17" viewBox="0 0 17 17" className="ml-[7px] block shrink-0"><path d="M8 0q3 2 7 2v5q0 5-7 9Q1 12 1 7V2q4 0 7-2z" fill="#fff" /><path d="M8 1v14M1 7h14" stroke="#222c3c" strokeWidth="1.200" /><path d="M11.500 7.500l5 9h-9z" fill="#f8c01a" /><path d="M11.700 10v3.200M11.700 14v1.300" stroke="#222" strokeWidth="1.200" /></svg>
      <svg width="17" height="15" viewBox="0 0 17 15" className="ml-[7px] block shrink-0" fill="none" stroke="#fff"><path d="M5 2.500h11v8H5.500M10 10.500v3M6.500 13.500h8M1 1.500h3.500v3.500H1zM2.700 5v8.500h3" /></svg>
      <svg width="16" height="14" viewBox="0 0 16 14" className="ml-[6px] block shrink-0" fill="none" stroke="#fff"><path d="M1 5h2l3.500-3.500v11L3 9H1zM10 4.500l5 5M15 4.500l-5 5" /></svg>
      <T w={23} className="ml-[11px] text-[11.500px]">ENG</T>
      <div className="ml-[12px] flex w-[55px] flex-col items-center text-[11.500px] leading-[18px]"><T w={27}>19:22</T><T w={54}>30.03.2023</T></div>
      <svg width="26" height="28" viewBox="0 0 26 28" className="ml-[17px] mr-[22px] block shrink-0">
        <path d="M1 5h16v12h-9l-3 3v-3H1z" fill="#fff" /><path d="M4 8.500h10M4 11.500h10M4 14.500h6" stroke="#1a2440" strokeWidth="1.200" />
        <circle cx="16.500" cy="19" r="7.700" fill="#3b4350" stroke="#a6abb2" /><text x="16.500" y="23.500" fontSize="12" textAnchor="middle" fill="#fff">1</text>
      </svg>
    </div>
  );
}

const menus = [["File", 18], ["Edit", 20], ["Options", 42], ["View", 25], ["Objects", 40], ["Tool", 22], ["Help", 25]];

export default function App() {
  return (
    <div className="flex h-[1080px] w-[1920px] flex-col overflow-hidden bg-[#efefef] font-[Noto_Sans,sans-serif] text-[12px] leading-[16px] text-black">
      <div className="flex h-[24px] items-center bg-white pl-[3px]">
        <FlatLogo s={14} />
        <T w={175} className="ml-[6px]">FlatCAM 8.994 BETA - 64bit - [3D]</T><T w={361} className="ml-[12px]">C:/Users/Student/Desktop/matmuh/Project_20230323_203449.FlatPrj</T>
        <svg width="104" height="14" viewBox="0 0 104 14" className="-mt-[3px] ml-auto mr-[19px] block" fill="none" stroke="#111">
          <path d="M2 7.500h10M47.500 5.500h7v7h-7zM49.500 5.500v-2h7v7h-2M93 3l9 9M102 3l-9 9" />
        </svg>
      </div>
      <div className="flex h-[21px] items-center bg-white pb-[2px] pl-[10px]">
        <Svg s={12} vb="0 0 12 12"><path d="M.7 1h10.600v10H.7z" /><path d="M0 .5h6v11H0z" fill="#111" stroke="none" /></Svg>
        <div className="ml-[18px] flex gap-[16px]">{menus.map(([t, w]) => <T key={t} w={w}>{t}</T>)}</div>
      </div>
      <Toolbar />
      <div className="flex h-[934px] gap-[7px]">
        <LeftPanel />
        <div className="flex w-[1612px] flex-col">
          <div className="flex h-[20px] w-[67px] items-center justify-center border border-b-0 border-[#d9d9d9] bg-white pr-[1px] pt-[2px]"><T w={44}>Plot Area</T></div>
          <div className="h-[914px] border border-[#d9d9d9] bg-white pl-[3px] pt-[3px]"><Plot /></div>
        </div>
      </div>
      <StatusBar />
      <TaskBar />
    </div>
  );
}
